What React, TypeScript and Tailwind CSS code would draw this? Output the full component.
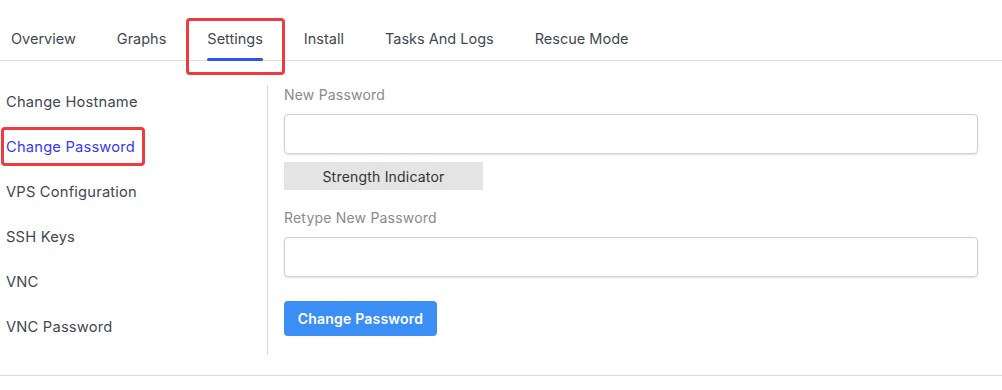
import React from 'react';

const TABS = ['Overview', 'Graphs', 'Settings', 'Install', 'Tasks And Logs', 'Rescue Mode'];
const MENU = ['Change Hostname', 'Change Password', 'VPS Configuration', 'SSH Keys', 'VNC', 'VNC Password'];

const App: React.FC = () => {
  return (
    <div className="w-[1002px] h-[390px] bg-white font-['Inter',sans-serif] overflow-hidden">
      {/* tabs */}
      <div className="flex h-[61px] border-b border-[#dcdcdc] pl-[1px]">
        {TABS.map((tab) => {
          const active = tab === 'Settings';
          return (
            <div key={tab} className="relative mr-[21px] flex items-center px-[10px] pt-[18px]">
              <span className="text-[14.5px] text-[#3f4852]">{tab}</span>
              {active && (
                <>
                  <div className="absolute left-[10px] right-[10px] bottom-[-1px] h-[3px] rounded-full bg-[#2f54eb]" />
                  <div className="absolute left-[-11px] right-[-12px] top-[18px] bottom-[-15px] rounded-[4px] border-[3px] border-[#ef3a3f]" />
                </>
              )}
            </div>
          );
        })}
      </div>

      <div className="flex border-b border-[#dcdcdc] h-[315px]">
        {/* sidebar */}
        <div className="w-[268px] pt-[24px] pb-[20px]">
          <div className="border-r border-[#dcdcdc] h-[270px] flex flex-col">
            {MENU.map((item) => {
              const active = item === 'Change Password';
              return (
                <div key={item} className="h-[45px] flex items-center pl-[6px] pb-[11px]">
                  <span
                    className={
                      active
                        ? 'relative text-[14.7px] tracking-[0.2px] text-[#3838f2]'
                        : 'text-[14.7px] tracking-[0.2px] text-[#3f4852]'
                    }
                  >
                    {item}
                    {active && (
                      <span className="absolute left-[-5px] right-[-10px] top-[-9px] bottom-[-8px] rounded-[4px] border-[3px] border-[#ef3a3f]" />
                    )}
                  </span>
                </div>
              );
            })}
          </div>
        </div>

        {/* form */}
        <div className="flex-1 pl-[16px] pr-[24px] pt-[23px]">
          <div className="text-[14px] tracking-[0.2px] text-[#8a8a8a]">New Password</div>
          <div className="mt-[9px] h-[40px] rounded-[4px] border border-[#cfcfcf] shadow-[0_1px_2px_rgba(0,0,0,0.12)]" />
          <div className="mt-[8px] w-[199px] h-[28px] bg-[#e4e4e4] flex items-center justify-center text-[14px] tracking-[0.2px] text-[#333]">
            Strength Indicator
          </div>
          <div className="mt-[17px] text-[14px] tracking-[0.2px] text-[#8a8a8a]">Retype New Password</div>
          <div className="mt-[9px] h-[40px] rounded-[4px] border border-[#cfcfcf] shadow-[0_1px_2px_rgba(0,0,0,0.12)]" />
          <button className="mt-[24px] h-[35px] w-[153px] rounded-[4px] bg-[#3b8ef3] text-white text-[14px] font-semibold tracking-[0.2px]">
            Change Password
          </button>
        </div>
      </div>
    </div>
  );
};

export default App;
